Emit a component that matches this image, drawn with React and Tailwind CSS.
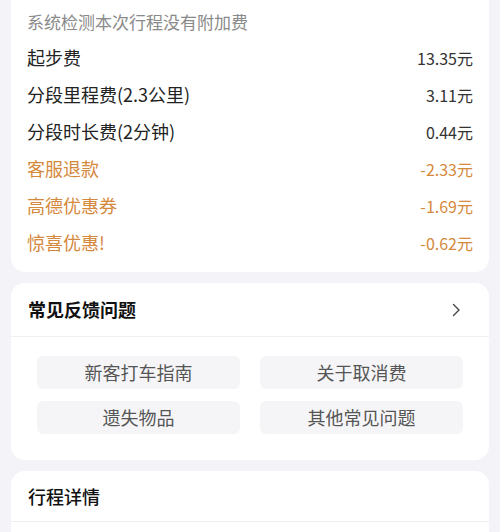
export default function App() {
  const fees = [
    { label: "起步费", value: "13.35元" },
    { label: "分段里程费(2.3公里)", value: "3.11元" },
    { label: "分段时长费(2分钟)", value: "0.44元" },
  ];
  const discounts = [
    { label: "客服退款", value: "-2.33元" },
    { label: "高德优惠券", value: "-1.69元" },
    { label: "惊喜优惠!", value: "-0.62元" },
  ];
  const questions = ["新客打车指南", "关于取消费", "遗失物品", "其他常见问题"];

  return (
    <div
      className="w-[500px] h-[532px] overflow-hidden bg-[#f4f4f8] px-[11px]"
      style={{ fontFamily: "'Noto Sans CJK SC', 'Noto Sans', sans-serif" }}
    >
      {/* fee card, top cut off */}
      <div className="bg-white rounded-b-[14px] px-[16px] pt-[5px] pb-[11px]">
        <div className="h-[34px] flex items-center text-[17px] text-[#8a8a8a]">
          系统检测本次行程没有附加费
        </div>
        {fees.map((f) => (
          <div key={f.label} className="h-[37px] flex items-center justify-between text-[18px] text-[#222]">
            <span>{f.label}</span>
            <span className="text-[16px] text-[#333]">{f.value}</span>
          </div>
        ))}
        {discounts.map((f) => (
          <div key={f.label} className="h-[37px] flex items-center justify-between text-[18px] text-[#d5893c]">
            <span>{f.label}</span>
            <span className="text-[16px]">{f.value}</span>
          </div>
        ))}
      </div>

      {/* faq */}
      <div className="mt-[11px] bg-white rounded-[14px]">
        <div className="h-[54px] flex items-center justify-between pl-[17px] pr-[28px] border-b border-[#f0f0f2]">
          <span className="text-[18px] font-bold text-[#111]">常见反馈问题</span>
          <svg width="9" height="14" viewBox="0 0 9 14" fill="none">
            <path d="M1.5 1.5 L7 7 L1.5 12.5" stroke="#444" strokeWidth="1.4" strokeLinecap="round" strokeLinejoin="round" />
          </svg>
        </div>
        <div className="grid grid-cols-2 gap-x-[20px] gap-y-[12px] px-[26px] pt-[19px] pb-[26px]">
          {questions.map((q) => (
            <div key={q} className="h-[33px] rounded-[6px] bg-[#f5f5f8] flex items-center justify-center text-[18px] text-[#555]">
              {q}
            </div>
          ))}
        </div>
      </div>

      {/* trip details */}
      <div className="mt-[11px] bg-white rounded-t-[14px] h-[80px]">
        <div className="h-[51px] flex items-center pl-[17px] border-b border-[#f0f0f2]">
          <span className="text-[18px] font-medium text-[#111]">行程详情</span>
        </div>
      </div>
    </div>
  );
}
